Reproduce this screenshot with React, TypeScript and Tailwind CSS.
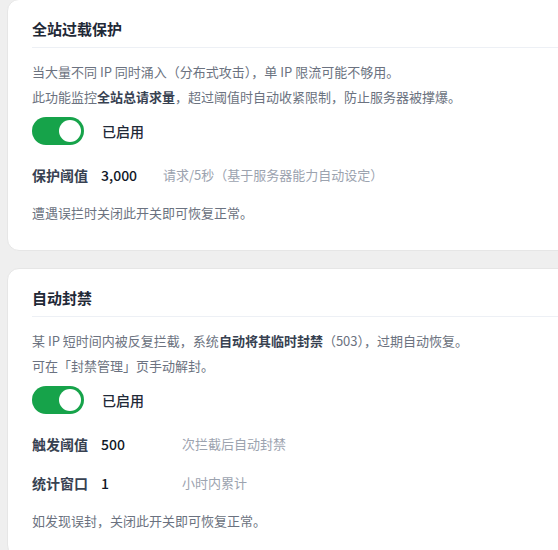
import React from "react";

function Toggle() {
  return (
    <div className="flex items-center gap-[18px]">
      <div className="relative h-[28px] w-[52px] rounded-full bg-[#16a34a]">
        <div className="absolute right-[3px] top-[3px] h-[22px] w-[22px] rounded-full bg-white" />
      </div>
      <span className="text-[14px] font-medium text-[#1f2937]">已启用</span>
    </div>
  );
}

function Row({ label, value, hint, w }: { label: string; value: string; hint: string; w: string }) {
  return (
    <div className="flex h-[36px] items-center">
      <span className="w-[69px] shrink-0 text-[14px] font-semibold text-[#374151]">{label}</span>
      <span className={`${w} shrink-0 text-[14px] font-medium text-[#111827]`}>{value}</span>
      <span className="text-[13px] text-[#9ca3af]">{hint}</span>
    </div>
  );
}

export default function App() {
  return (
    <div
      className="min-h-[550px] w-[558px] overflow-hidden bg-[#efefef] pl-[7px]"
      style={{ fontFamily: '"Noto Sans CJK SC", "Noto Sans", sans-serif' }}
    >
      <div className="-mt-px w-[620px] rounded-[12px] border border-[#e6e6e6] bg-white px-6 pb-[27px] pt-[19px]">
        <div className="border-b border-[#edf0f5] pb-[8px] text-[15px] font-bold leading-5 text-[#1f2937]">
          全站过载保护
        </div>
        <div className="mt-[11px] text-[13px] leading-[25px] text-[#6b7280]">
          <p>当大量不同 IP 同时涌入（分布式攻击），单 IP 限流可能不够用。</p>
          <p>
            此功能监控<span className="font-bold text-[#374151]">全站总请求量</span>，超过阈值时自动收紧限制，防止服务器被撑爆。
          </p>
        </div>
        <div className="mt-[8px]">
          <Toggle />
        </div>
        <div className="mt-[12px]">
          <Row label="保护阈值" value="3,000" hint="请求/5秒（基于服务器能力自动设定）" w="w-[62px]" />
        </div>
        <p className="mt-[10px] text-[13px] leading-5 text-[#6b7280]">遭遇误拦时关闭此开关即可恢复正常。</p>
      </div>

      <div className="mt-[17px] w-[620px] rounded-[12px] border border-[#e6e6e6] bg-white px-6 pb-[25px] pt-[19px]">
        <div className="border-b border-[#edf0f5] pb-[8px] text-[15px] font-bold leading-5 text-[#1f2937]">
          自动封禁
        </div>
        <div className="mt-[11px] text-[13px] leading-[25px] text-[#6b7280]">
          <p>
            某 IP 短时间内被反复拦截，系统<span className="font-bold text-[#374151]">自动将其临时封禁</span>（503），过期自动恢复。
          </p>
          <p>可在「封禁管理」页手动解封。</p>
        </div>
        <div className="mt-[8px]">
          <Toggle />
        </div>
        <div className="mt-[12px] flex flex-col gap-[3px]">
          <Row label="触发阈值" value="500" hint="次拦截后自动封禁" w="w-[81px]" />
          <Row label="统计窗口" value="1" hint="小时内累计" w="w-[81px]" />
        </div>
        <p className="mt-[10px] text-[13px] leading-5 text-[#6b7280]">如发现误封，关闭此开关即可恢复正常。</p>
      </div>
    </div>
  );
}
